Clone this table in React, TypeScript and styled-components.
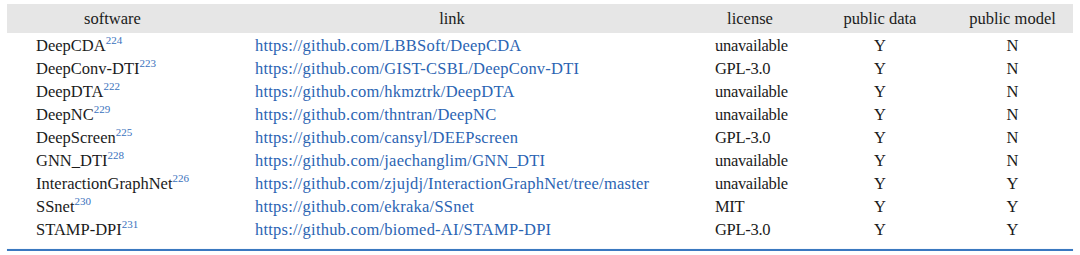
import React from "react";
import styled, { createGlobalStyle } from "styled-components";

const Global = createGlobalStyle`
  html, body { margin: 0; padding: 0; background: #ffffff; }
  body { font-family: "Liberation Serif", "Times New Roman", serif; color: #1b1b1b; }
`;

const Wrap = styled.div`
  padding: 4px 7px 0 7px;
  width: 1066px;
`;

const cols = "211px 468px 132px 124px 131px";

const HeaderRow = styled.div`
  display: grid;
  grid-template-columns: ${cols};
  height: 29px;
  align-items: center;
  background: #e6e6e6;
  font-size: 16.5px;
`;

const HeadCell = styled.div<{ $shift?: number }>`
  text-align: center;
  transform: translateX(${(p) => p.$shift ?? 0}px);
  line-height: 29px;
`;

const Body = styled.div`
  padding-top: 1px;
`;

const Row = styled.div`
  display: grid;
  grid-template-columns: ${cols};
  height: 23px;
  align-items: center;
  font-size: 16.5px;
  line-height: 23px;
  white-space: nowrap;
`;

const LeftCell = styled.div<{ $pad: number; $spacing?: number }>`
  padding-left: ${(p) => p.$pad}px;
  letter-spacing: ${(p) => p.$spacing ?? 0}px;
`;

const CenterCell = styled.div<{ $shift?: number }>`
  text-align: center;
  transform: translateX(${(p) => p.$shift ?? 0}px);
`;

const Link = styled.a`
  color: #2b64b3;
  text-decoration: none;
  letter-spacing: 0.22px;
`;

const Ref = styled.sup`
  color: #3a72bd;
  font-size: 11px;
  vertical-align: 7px;
  line-height: 0;
  letter-spacing: 0;
`;

const BottomRule = styled.div`
  margin-top: 8px;
  height: 2px;
  background: #3a78c0;
  box-shadow: 0 0 1px #9fc0e4;
`;

type Item = { name: string; ref: number; url: string; license: string; data: string; model: string };

const items: Item[] = [
  { name: "DeepCDA", ref: 224, url: "https://github.com/LBBSoft/DeepCDA", license: "unavailable", data: "Y", model: "N" },
  { name: "DeepConv-DTI", ref: 223, url: "https://github.com/GIST-CSBL/DeepConv-DTI", license: "GPL-3.0", data: "Y", model: "N" },
  { name: "DeepDTA", ref: 222, url: "https://github.com/hkmztrk/DeepDTA", license: "unavailable", data: "Y", model: "N" },
  { name: "DeepNC", ref: 229, url: "https://github.com/thntran/DeepNC", license: "unavailable", data: "Y", model: "N" },
  { name: "DeepScreen", ref: 225, url: "https://github.com/cansyl/DEEPscreen", license: "GPL-3.0", data: "Y", model: "N" },
  { name: "GNN_DTI", ref: 228, url: "https://github.com/jaechanglim/GNN_DTI", license: "unavailable", data: "Y", model: "N" },
  { name: "InteractionGraphNet", ref: 226, url: "https://github.com/zjujdj/InteractionGraphNet/tree/master", license: "unavailable", data: "Y", model: "Y" },
  { name: "SSnet", ref: 230, url: "https://github.com/ekraka/SSnet", license: "MIT", data: "Y", model: "Y" },
  { name: "STAMP-DPI", ref: 231, url: "https://github.com/biomed-AI/STAMP-DPI", license: "GPL-3.0", data: "Y", model: "Y" },
];

export default function App() {
  return (
    <>
      <Global />
      <Wrap>
        <HeaderRow>
          <HeadCell>software</HeadCell>
          <HeadCell>link</HeadCell>
          <HeadCell $shift={-2}>license</HeadCell>
          <HeadCell>public data</HeadCell>
          <HeadCell $shift={5}>public model</HeadCell>
        </HeaderRow>
        <Body>
          {items.map((it) => (
            <Row key={it.name}>
              <LeftCell $pad={29}>
                {it.name}
                <Ref>{it.ref}</Ref>
              </LeftCell>
              <LeftCell $pad={37}>
                <Link href={it.url}>{it.url}</Link>
              </LeftCell>
              <LeftCell $pad={29} $spacing={-0.3}>{it.license}</LeftCell>
              <CenterCell>{it.data}</CenterCell>
              <CenterCell $shift={5}>{it.model}</CenterCell>
            </Row>
          ))}
        </Body>
        <BottomRule />
      </Wrap>
    </>
  );
}
